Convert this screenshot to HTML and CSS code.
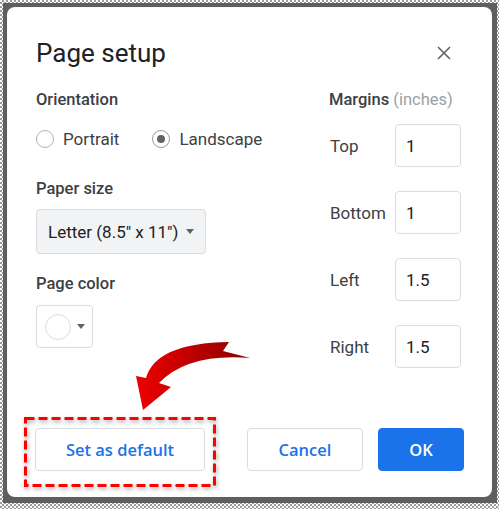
FILE: index.html
```html
<!DOCTYPE html>
<html lang="en">
<head>
<meta charset="utf-8">
<title>Page setup</title>
<link rel="stylesheet" href="styles.css">
</head>
<body>
<div class="backdrop">
  <div class="dialog">
    <div class="header">
      <h1 class="title">Page setup</h1>
      <button class="close" aria-label="Close">
        <svg width="14" height="14" viewBox="0 0 14 14"><path d="M1 1 L13 13 M13 1 L1 13" stroke="#5f6368" stroke-width="1.6" fill="none"/></svg>
      </button>
    </div>
    <div class="content">
      <div class="left">
        <div class="label">Orientation</div>
        <div class="radios">
          <label class="radio"><span class="circle"></span>Portrait</label>
          <label class="radio"><span class="circle checked"></span>Landscape</label>
        </div>
        <div class="label gap-paper">Paper size</div>
        <div class="select">Letter (8.5" x 11")<span class="caret"></span></div>
        <div class="label gap-color">Page color</div>
        <div class="color-btn"><span class="swatch"></span><span class="caret"></span></div>
      </div>
      <div class="right">
        <div class="label">Margins <span class="unit">(inches)</span></div>
        <div class="margins">
          <div class="mrow"><span class="mlabel">Top</span><span class="input">1</span></div>
          <div class="mrow"><span class="mlabel">Bottom</span><span class="input">1</span></div>
          <div class="mrow"><span class="mlabel">Left</span><span class="input">1.5</span></div>
          <div class="mrow"><span class="mlabel">Right</span><span class="input">1.5</span></div>
        </div>
      </div>
    </div>
    <div class="footer">
      <div class="highlight-wrap">
        <button class="btn">Set as default</button>
        <svg class="highlight" width="192" height="70" viewBox="0 0 192 70">
          <rect x="1.5" y="1.5" width="189" height="67" fill="none" stroke="#ff0000" stroke-width="3" stroke-dasharray="9 4"/>
        </svg>
      </div>
      <div class="actions">
        <button class="btn cancel">Cancel</button>
        <button class="btn primary">OK</button>
      </div>
    </div>
    <svg class="arrow" width="116" height="74" viewBox="0 0 116 74">
      <defs>
        <linearGradient id="ag" x1="0" y1="0" x2="1" y2="0">
          <stop offset="0" stop-color="#ee0000"/>
          <stop offset="1" stop-color="#8a0000"/>
        </linearGradient>
      </defs>
      <path d="M0 38 L10 40 Q20 5 93 4 L87 13 L114 20 Q52 15 23 45 L35 49 L7 72 Z" fill="url(#ag)"/>
    </svg>
  </div>
</div>
</body>
</html>
```
FILE: styles.css
```css
* { box-sizing: border-box; }
html, body { margin: 0; padding: 0; }
body {
  width: 499px;
  height: 509px;
  overflow: hidden;
  background: repeating-conic-gradient(#9a9a9a 0 25%, #ffffff 0 50%) 0 0 / 4px 4px;
  font-family: Roboto, "Liberation Sans", sans-serif;
  color: #3c4043;
}
.backdrop {
  margin: 3px 2px 6px 3px;
  height: 500px;
  background: #5e5e5e;
  padding: 4px 5px 6px 4px;
}
.dialog {
  position: relative;
  height: 100%;
  background: #fff;
  border-radius: 8px;
  padding: 30px 31px 26px 29px;
  display: flex;
  flex-direction: column;
}
.header {
  display: flex;
  align-items: center;
  justify-content: space-between;
}
.title {
  margin: 0;
  font-size: 26px;
  line-height: 32px;
  font-weight: 400;
  color: #202124;
}
.close {
  border: 0;
  background: none;
  padding: 0;
  margin-right: 10px;
  width: 14px;
  height: 14px;
  display: flex;
}
.content {
  display: flex;
  justify-content: space-between;
  margin-top: 21px;
}
.label {
  font-size: 16.5px;
  line-height: 20px;
  font-weight: 500;
  color: #3c4043;
}
.unit { font-weight: 400; color: #9aa0a6; }
.radios {
  display: flex;
  margin-top: 19px;
  gap: 33px;
}
.radio {
  display: flex;
  align-items: center;
  font-size: 17px;
  line-height: 20px;
  gap: 9px;
  color: #3c4043;
}
.circle {
  width: 18px;
  height: 18px;
  border: 1px solid #b4b4b4;
  border-radius: 50%;
  display: flex;
  align-items: center;
  justify-content: center;
}
.circle.checked { border-color: #9a9a9a; }
.circle.checked::after {
  content: "";
  width: 8px;
  height: 8px;
  border-radius: 50%;
  background: #5f6368;
}
.gap-paper { margin-top: 30px; }
.gap-color { margin-top: 20px; }
.select {
  margin-top: 10px;
  width: 170px;
  height: 45px;
  background: #f1f3f4;
  border: 1px solid #dadce0;
  border-radius: 4px;
  display: flex;
  align-items: center;
  padding-left: 11px;
  font-size: 17px;
  color: #202124;
}
.caret {
  width: 0;
  height: 0;
  border-left: 4.5px solid transparent;
  border-right: 4.5px solid transparent;
  border-top: 5px solid #5f6368;
}
.select .caret { margin-left: 8px; }
.color-btn {
  margin-top: 11px;
  width: 57px;
  height: 43px;
  border: 1px solid #dadce0;
  border-radius: 4px;
  display: flex;
  align-items: center;
  padding-left: 8px;
  gap: 6px;
}
.swatch {
  width: 26px;
  height: 26px;
  border: 1px solid #dadce0;
  border-radius: 50%;
  background: #fff;
}
.right { width: 132px; }
.margins {
  margin-top: 14px;
  display: flex;
  flex-direction: column;
  gap: 24px;
}
.mrow {
  display: flex;
  align-items: center;
}
.mlabel {
  width: 66px;
  padding-left: 1px;
  font-size: 17px;
  color: #3c4043;
}
.input {
  width: 66px;
  height: 43px;
  border: 1px solid #dadce0;
  border-radius: 4px;
  display: flex;
  align-items: center;
  padding-left: 10px;
  font-size: 17px;
  color: #202124;
}
.footer {
  margin: auto -3px 0 -1px;
  display: flex;
  justify-content: space-between;
}
.actions { display: flex; gap: 15px; }
.btn {
  height: 43px;
  border: 1px solid #dadce0;
  border-radius: 4px;
  background: #fff;
  font-family: "Open Sans", Roboto, sans-serif;
  font-size: 16.5px;
  font-weight: 600;
  color: #1a73e8;
  padding: 0;
}
.highlight-wrap { position: relative; }
.highlight-wrap .btn { width: 170px; }
.highlight {
  position: absolute;
  left: -11px;
  top: -11px;
  filter: drop-shadow(1px 2px 2px rgba(0,0,0,0.35));
}
.cancel { width: 116px; }
.primary {
  width: 86px;
  background: #1a73e8;
  border-color: #1a73e8;
  color: #fff;
}
.arrow {
  position: absolute;
  left: 129px;
  top: 331px;
}
```
